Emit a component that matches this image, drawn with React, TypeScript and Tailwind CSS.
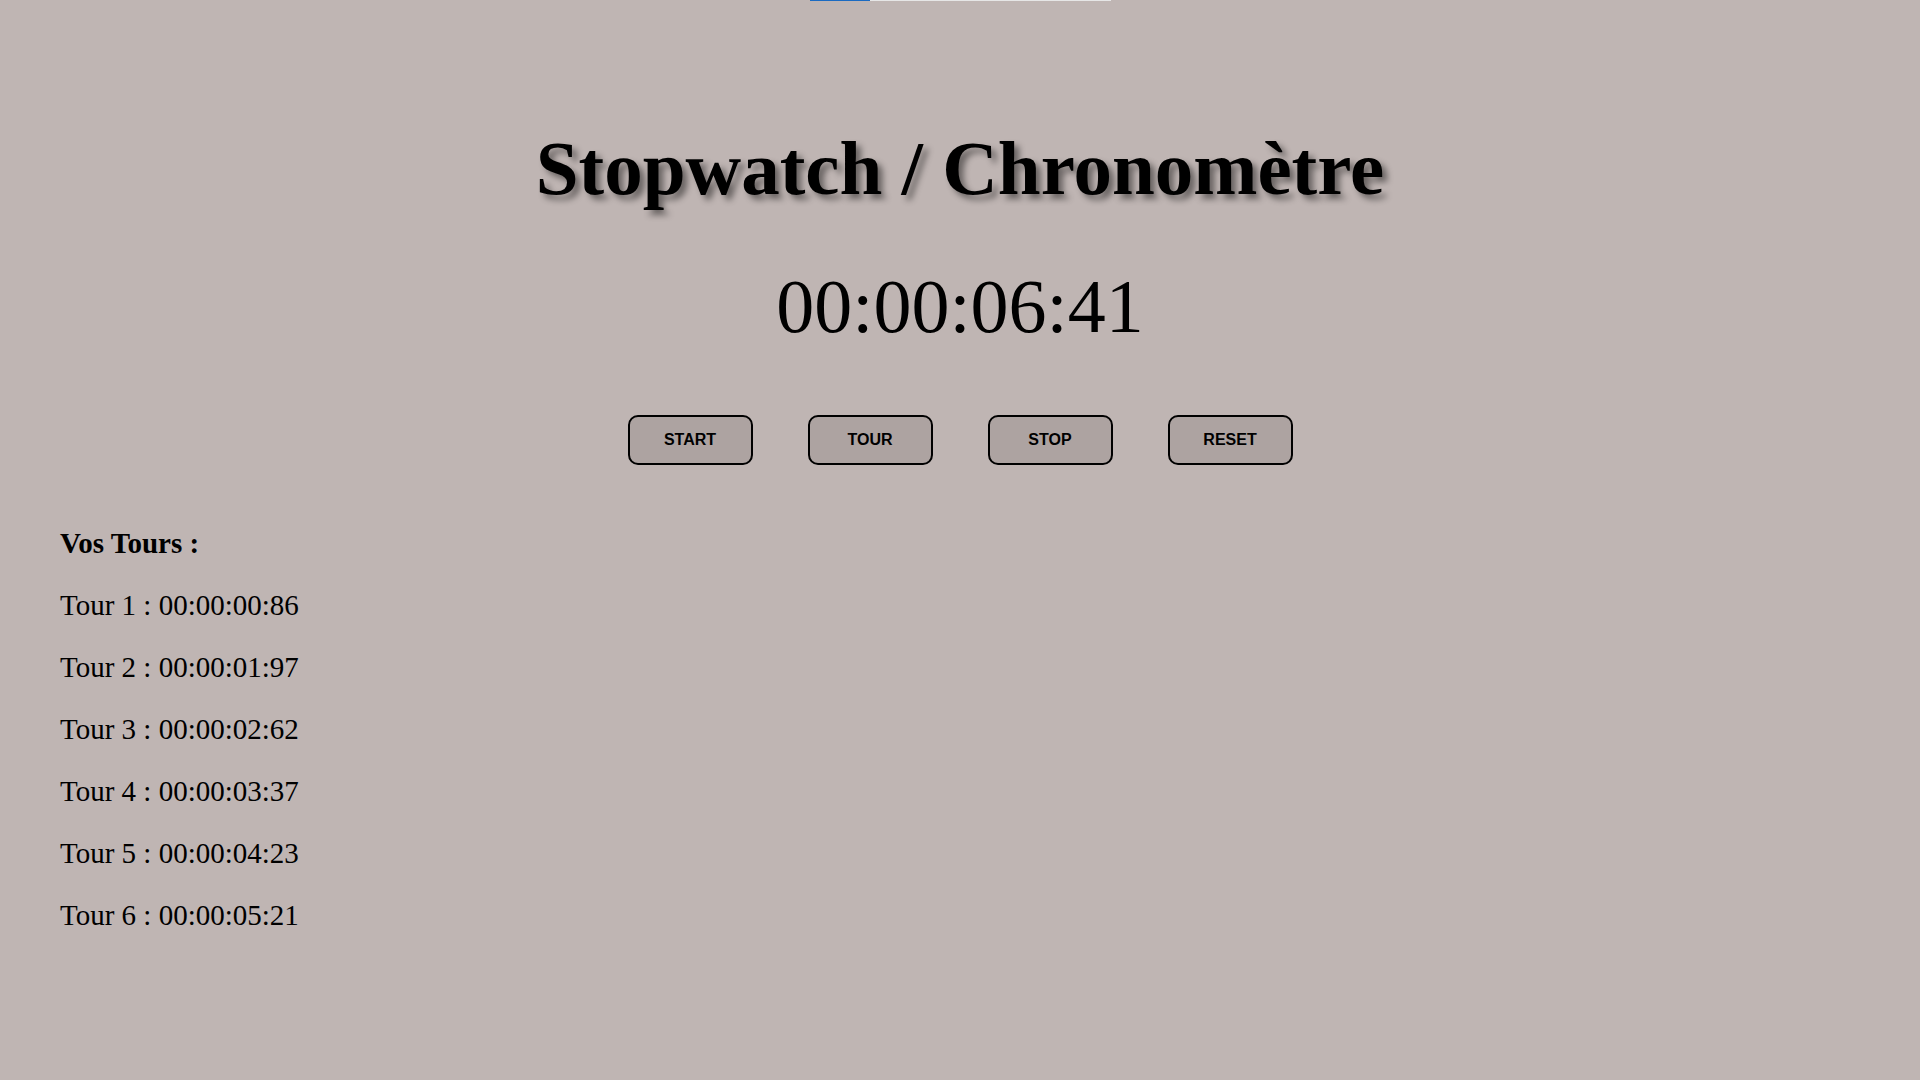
import React from "react";

const laps = [
  "00:00:00:86",
  "00:00:01:97",
  "00:00:02:62",
  "00:00:03:37",
  "00:00:04:23",
  "00:00:05:21",
];

export default function App() {
  return (
    <div className="min-h-screen w-full bg-[#bfb5b3] text-black font-['Liberation_Serif','Times_New_Roman',serif]">
      <div className="flex justify-center">
        <div className="flex h-px w-[301px] bg-[#e6e6e6]">
          <div className="h-px w-[60px] bg-[#1b6ac1]" />
        </div>
      </div>
      <h1 className="mt-[129px] text-center text-[77px] font-bold leading-none [text-shadow:5px_5px_6px_rgba(0,0,0,0.45)]">
        Stopwatch / Chronomètre
      </h1>
      <div className="mt-[61px] text-center text-[76px] leading-none">00:00:06:41</div>
      <div className="mt-[71px] flex justify-center gap-[55px]">
        {["START", "TOUR", "STOP", "RESET"].map((b) => (
          <button
            key={b}
            className="h-[50px] w-[125px] rounded-[10px] border-2 border-black bg-[#ada3a1] font-['Liberation_Sans',Arial,sans-serif] text-[16px] font-bold text-black"
          >
            {b}
          </button>
        ))}
      </div>
      <div className="mt-[64px] flex flex-col gap-[33px] pl-[60px] text-[29px] leading-none">
        <div className="font-bold">Vos Tours :</div>
        {laps.map((l, i) => (
          <div key={i}>
            Tour {i + 1} : {l}
          </div>
        ))}
      </div>
    </div>
  );
}
